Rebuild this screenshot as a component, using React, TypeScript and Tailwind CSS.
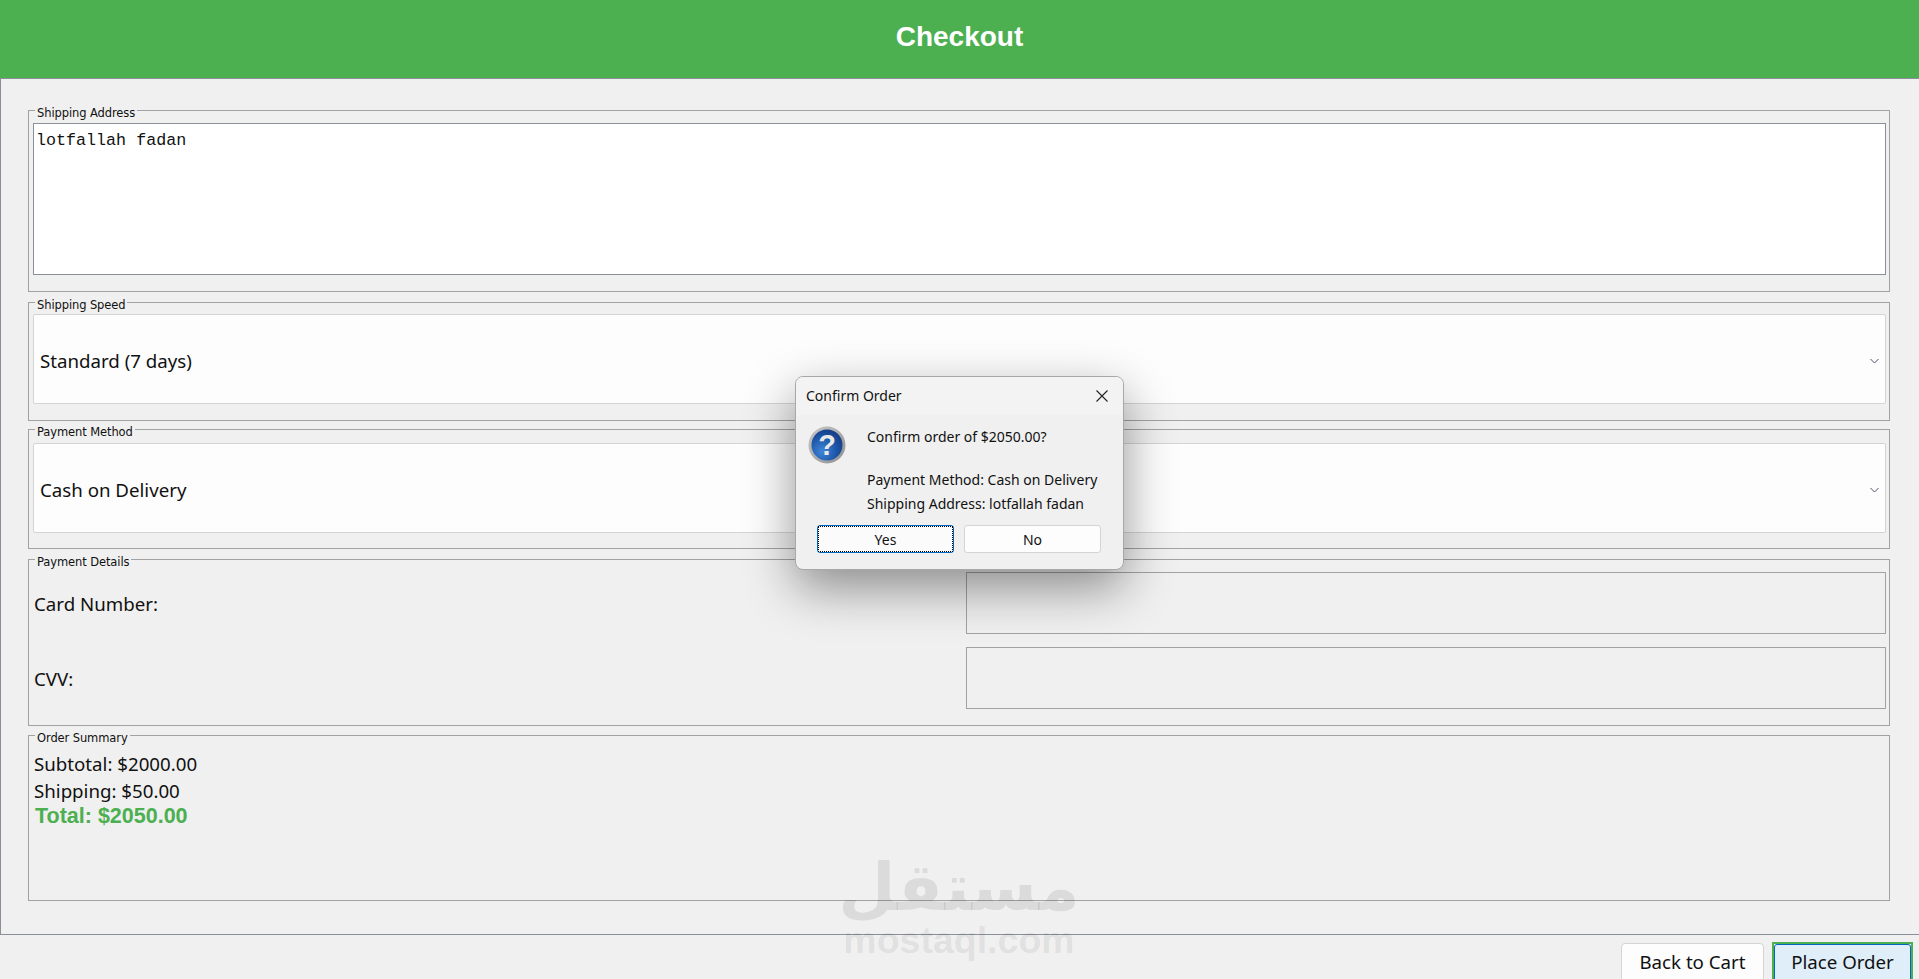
import React from "react";

const SEGOE = "font-['Noto_Sans',sans-serif]";

function Chevron() {
  return (
    <svg width="9" height="6" viewBox="0 0 9 6" fill="none" className="shrink-0">
      <path d="M0.5 1 L4.5 5 L8.5 1" stroke="#4a5568" strokeWidth="1" />
    </svg>
  );
}

function Group({ title, className, children }: { title: string; className: string; children: React.ReactNode }) {
  return (
    <fieldset className={`border border-[#a2a2a2] pl-[4px] pr-[3px] ${className}`}>
      <legend className="ml-[2px] h-[13px] px-[2px] text-[11.5px] leading-[18px] text-[#111] font-['DejaVu_Sans',sans-serif] tracking-[-0.1px]">
        {title}
      </legend>
      {children}
    </fieldset>
  );
}

function Combo({ value }: { value: string }) {
  return (
    <div className="flex h-[90px] items-center justify-between rounded-[2px] border border-[#d4d4d4] bg-[#fdfdfd] px-[6px] pt-[4px]">
      <span className={`${SEGOE} text-[18.7px] text-[#111]`}>{value}</span>
      <Chevron />
    </div>
  );
}

function QuestionIcon() {
  return (
    <svg width="38" height="38" viewBox="0 0 38 38" className="shrink-0">
      <defs>
        <radialGradient id="qb" cx="35%" cy="70%" r="75%">
          <stop offset="0%" stopColor="#3f86d8" />
          <stop offset="60%" stopColor="#1d56a8" />
          <stop offset="100%" stopColor="#123c86" />
        </radialGradient>
        <linearGradient id="qr" x1="0" y1="0" x2="1" y2="1">
          <stop offset="0%" stopColor="#c8c8c8" />
          <stop offset="100%" stopColor="#8f8f8f" />
        </linearGradient>
      </defs>
      <circle cx="19" cy="19" r="18.5" fill="url(#qr)" />
      <circle cx="19" cy="19" r="15.5" fill="url(#qb)" />
      <text x="19" y="29" textAnchor="middle" fontFamily="Liberation Sans" fontWeight="700" fontSize="29" fill="#e8e8e8">?</text>
    </svg>
  );
}

function Dialog() {
  return (
    <div className={`absolute left-[795px] top-[376px] h-[194px] w-[329px] overflow-hidden rounded-[8px] border border-[#a8a8a8] bg-[#f0f0f0] shadow-[0_18px_50px_rgba(0,0,0,0.42)] ${SEGOE}`}>
      <div className="flex h-[38px] items-center justify-between bg-[#f3f3f3] pb-[1px] pl-[10px] pr-[15px] text-[14px] text-[#111]">
        <span>Confirm Order</span>
        <svg width="12" height="12" viewBox="0 0 12 12" fill="none">
          <path d="M0.5 0.5 L11.5 11.5 M11.5 0.5 L0.5 11.5" stroke="#222" strokeWidth="1.1" />
        </svg>
      </div>
      <div className="flex pl-[12px] pt-[11px]">
        <QuestionIcon />
        <div className="ml-[21px] text-[14px] leading-[24px] text-[#111]">
          <div className="-mt-[1px]">Confirm order of $2050.00?</div>
          <div className="mt-[19px]">Payment Method: Cash on Delivery</div>
          <div>Shipping Address: lotfallah fadan</div>
        </div>
      </div>
      <div className="mt-[9px] flex gap-[10px] pl-[21px]">
        <button className="h-[28px] w-[137px] rounded-[3px] border border-[#0067c0] bg-[#fbfbfb] text-[14px] text-[#111]">
          <span className="flex h-full w-full items-center justify-center border border-dotted border-black">Yes</span>
        </button>
        <button className="flex h-[28px] w-[137px] items-center justify-center rounded-[3px] border border-[#d4d4d4] bg-[#fdfdfd] text-[14px] text-[#111]">
          No
        </button>
      </div>
    </div>
  );
}

function Watermark() {
  return (
    <div className="pointer-events-none absolute left-[844px] top-[854px] flex w-[230px] flex-col items-center text-[rgba(0,0,0,0.085)]">
      <div className="h-[67px] text-[66px] leading-[68px] font-bold font-['DejaVu_Sans',sans-serif]" dir="rtl">مستقل</div>
      <div className="text-[37.5px] leading-[38px] font-bold font-['Liberation_Sans',sans-serif]">mostaql.com</div>
    </div>
  );
}

export default function App() {
  return (
    <div className="relative flex h-[979px] flex-col overflow-hidden bg-[#f0f0f0]">
      <header className="flex h-[78px] shrink-0 items-center justify-center bg-[#4caf50] pb-[4px]">
        <h1 className="text-[28px] font-bold text-white font-['Liberation_Sans',sans-serif]">Checkout</h1>
      </header>

      <main className="flex h-[857px] shrink-0 flex-col border-t border-b border-l border-[#8a8f9a] pl-[27px] pr-[29px] pt-[25px]">
        <Group title="Shipping Address" className="h-[188px] pt-[6px]">
          <div className="h-[152px] border border-[#8a8f9a] bg-white px-[2px] pt-[6px] text-[16.7px] leading-[22px] text-[#111] font-['Liberation_Mono',monospace]">
            lotfallah fadan
          </div>
        </Group>

        <Group title="Shipping Speed" className="mt-[4px] h-[125px] pt-[5px]">
          <Combo value="Standard (7 days)" />
        </Group>

        <Group title="Payment Method" className="mt-[2px] h-[126px] pt-[7px]">
          <Combo value="Cash on Delivery" />
        </Group>

        <Group title="Payment Details" className="mt-[4px] h-[173px] pt-[6px]">
          <div className={`grid grid-cols-[933px_1fr] gap-y-[13px] ${SEGOE} text-[18.7px] text-[#111]`}>
            <div className="flex h-[62px] items-center pl-[1px] pt-[2px]">Card Number:</div>
            <div className="h-[62px] border border-[#a2a2a2]" />
            <div className="flex h-[62px] items-center pl-[1px] pt-[2px]">CVV:</div>
            <div className="h-[62px] border border-[#a2a2a2]" />
          </div>
        </Group>

        <Group title="Order Summary" className="mt-[3px] h-[172px]">
          <div className={`pl-[1px] pt-[8px] ${SEGOE} text-[18.7px] leading-[27px] text-[#111]`}>
            <div>Subtotal: $2000.00</div>
            <div>Shipping: $50.00</div>
            <div className="-mt-[1px] pl-[1px] text-[21.5px] font-bold leading-[27px] text-[#4caf50] font-['Liberation_Sans',sans-serif]">Total: $2050.00</div>
          </div>
        </Group>
      </main>

      <footer className={`flex shrink-0 items-start justify-end gap-[8px] pr-[6px] pt-[7px] ${SEGOE} text-[18.7px] text-[#111]`}>
        <button className="mt-[1px] h-[42px] w-[143px] rounded-[4px] border border-[#d4d4d4] bg-[#fdfdfd] pb-[4px]">Back to Cart</button>
        <div className="h-[44px] w-[141px] border-[2px] border-[#4caf50]">
          <button className="h-full w-full rounded-[3px] border border-[#0067c0] bg-[#e0eef9] pb-[4px]">Place Order</button>
        </div>
      </footer>

      <Watermark />
      <Dialog />
    </div>
  );
}
